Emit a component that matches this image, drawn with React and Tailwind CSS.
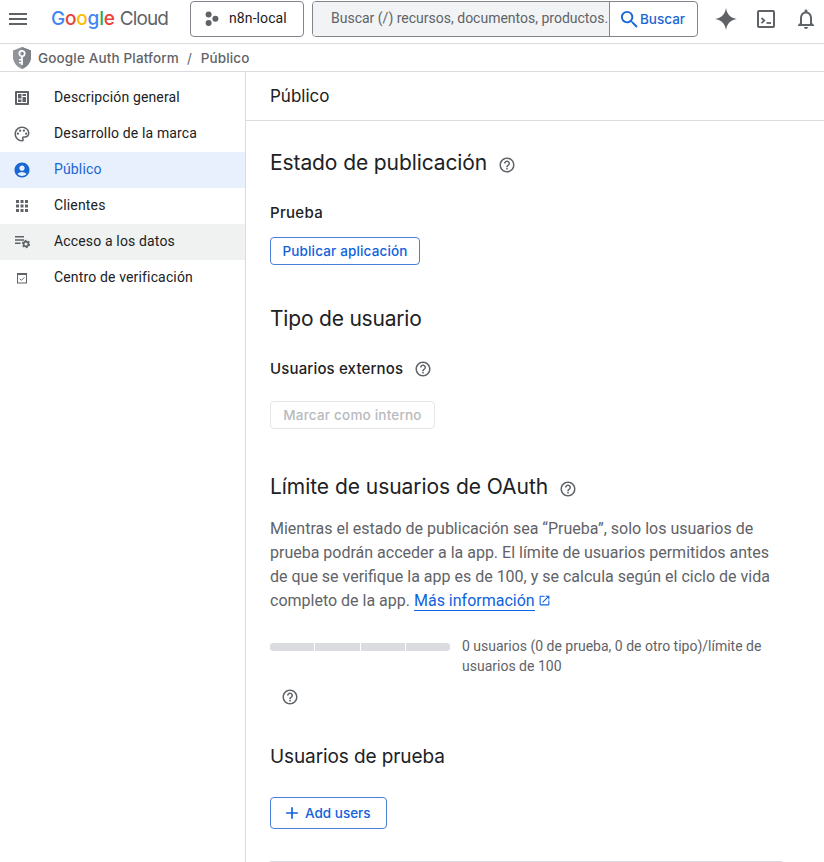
import React from "react";
import {
  MdMenu,
  MdSearch,
  MdHelpOutline,
  MdOutlinePalette,
  MdAccountCircle,
  MdApps,
  MdOpenInNew,
  MdAdd,
  MdNotificationsNone,
} from "react-icons/md";

const display = "font-['Google_Sans',Inter,sans-serif]";

function ProjectIcon() {
  return (
    <svg width="14" height="16" viewBox="0 0 14 16" fill="#5f6368">
      <circle cx="3.6" cy="3.6" r="3" />
      <circle cx="10.4" cy="7.8" r="3" />
      <circle cx="3.6" cy="12" r="3" />
    </svg>
  );
}

function ShieldIcon() {
  return (
    <svg width="20" height="24" viewBox="0 0 20 24">
      <path d="M10 1 19 4.4V11c0 5.4-3.7 9.9-9 12C4.7 20.9 1 16.4 1 11V4.4z" fill="#8f959a" />
      <path d="M10 1 19 4.4V11c0 5.4-3.7 9.9-9 12z" fill="#7d8388" />
      <circle cx="10" cy="7.6" r="2.7" fill="none" stroke="#fff" strokeWidth="1.7" />
      <path d="M9.2 10h1.7v9H9.200zM7 13h2.500v1.600H7zM7 16h2.500v1.600H7z" fill="#fff" />
    </svg>
  );
}

function SparkIcon() {
  return (
    <svg width="22" height="22" viewBox="0 0 22 22" fill="#5f6368">
      <path d="M11 0C12 6.500 15.500 10 22 11C15.500 12 12 15.500 11 22C10 15.500 6.500 12 0 11C6.500 10 10 6.500 11 0z" />
    </svg>
  );
}

function ShellIcon() {
  return (
    <svg width="18" height="18" viewBox="0 0 18 18" fill="none" stroke="#5f6368" strokeWidth="2">
      <rect x="1" y="1" width="16" height="16" rx="1" />
      <path d="m4.500 8 2.800 2.600-2.800 2.600" strokeWidth="1.800" />
      <path d="M9.500 13H14" strokeWidth="1.800" />
    </svg>
  );
}

function OverviewIcon() {
  return (
    <svg width="14" height="14" viewBox="0 0 14 14">
      <rect width="14" height="14" rx="1" fill="#5f6368" />
      <path d="M2 2h10v10H2z" fill="#fff" />
      <path d="M3 3h3.500v4.500H3zM7.500 3H11v2H7.500zM3 8.500h3.500V11H3zM7.500 6H11v5H7.500z" fill="#5f6368" />
    </svg>
  );
}

function DataAccessIcon() {
  return (
    <svg width="16" height="14" viewBox="0 0 16 14" fill="#5f6368">
      <path d="M1 1h9v1.500H1zM1 4.300h9v1.500H1zM1 7.600h5.500v1.500H1z" />
      <circle cx="12" cy="9" r="2.400" fill="none" stroke="#5f6368" strokeWidth="1.600" />
      <circle cx="12" cy="9" r="3.500" fill="none" stroke="#5f6368" strokeWidth="1.400" strokeDasharray="1.833" />
    </svg>
  );
}

function VerificationIcon() {
  return (
    <svg width="10" height="11" viewBox="0 0 10 11" fill="none" stroke="#5f6368">
      <rect x=".5" y=".5" width="9" height="9.500" />
      <path d="M0 1.200h10" strokeWidth="1.600" />
      <path d="m2.700 5.700 1.700 1.600 3-3" />
    </svg>
  );
}

function Help({ className = "" }) {
  return <MdHelpOutline size={18} className={"text-[#5f6368] " + className} />;
}

const nav = [
  { label: "Descripción general", icon: <OverviewIcon /> },
  { label: "Desarrollo de la marca", icon: <MdOutlinePalette size={18} /> },
  { label: "Público", icon: <MdAccountCircle size={18} />, state: "active" },
  { label: "Clientes", icon: <MdApps size={18} /> },
  { label: "Acceso a los datos", icon: <DataAccessIcon />, state: "hover" },
  { label: "Centro de verificación", icon: <VerificationIcon /> },
];

const rowStyles = {
  active: "bg-[#e8f0fe] text-[#1967d2]",
  hover: "bg-[#f0f2f1] text-[#202124]",
  idle: "text-[#202124]",
};

function TopBar() {
  return (
    <header className="flex h-11 items-start border-b border-[#dadce0] pt-px">
      <div className="flex h-9 w-[190px] items-center">
        <MdMenu size={24} className="ml-1.5 text-[#5f6368]" />
        <div className={display + " ml-[21px] flex gap-[5px] text-[19px] text-[#5f6368]"}>
          <span className="font-medium tracking-[-0.2px]">
            <span className="text-[#4285f4]">G</span>
            <span className="text-[#ea4335]">o</span>
            <span className="text-[#fbbc04]">o</span>
            <span className="text-[#4285f4]">g</span>
            <span className="text-[#34a853]">l</span>
            <span className="text-[#ea4335]">e</span>
          </span>
          <span className="tracking-[-0.9px]">Cloud</span>
        </div>
      </div>
      <button className="flex h-9 w-[114px] items-center rounded border border-[#80868b] pl-3.5 text-sm text-[#202124]">
        <ProjectIcon />
        <span className="-mt-0.5 ml-2.5 tracking-[0.1px]">n8n-local</span>
      </button>
      <div className="ml-2 flex h-9 w-[386px] overflow-hidden rounded border border-[#80868b]">
        <div className="flex w-[297px] items-center overflow-hidden border-r border-[#80868b] bg-[#f1f3f4] pb-0.5 pl-[18px] text-sm whitespace-nowrap text-[#5f6368]">
          <span>Buscar (/) recursos, documentos, productos.</span>
        </div>
        <button className="flex flex-1 items-center pl-2 text-[#1967d2]">
          <MdSearch size={23} />
          <span className={display + " -ml-px text-[13.5px] font-medium"}>Buscar</span>
        </button>
      </div>
      <div className="flex h-9 flex-1 items-center pl-[17px] text-[#5f6368]">
        <SparkIcon />
        <div className="ml-5"><ShellIcon /></div>
        <MdNotificationsNone size={24} className="ml-[19px] shrink-0" />
      </div>
    </header>
  );
}

export default function App() {
  return (
    <div className="flex h-[862px] w-[824px] flex-col overflow-hidden bg-white font-[Roboto,sans-serif] text-[#202124]">
      <TopBar />
      <div className={display + " flex h-7 items-center border-b border-[#dadce0] pl-3 text-[13.5px] font-medium text-[#5f6368]"}>
        <ShieldIcon />
        <span className="mt-px ml-1.5 tracking-[0.15px]">Google Auth Platform</span>
        <span className="mt-px ml-2 font-normal">/</span>
        <span className="mt-px ml-[9px] tracking-[0.1px]">Público</span>
      </div>
      <div className="flex min-h-0 flex-1">
        <nav className="w-[246px] shrink-0 border-r border-[#dadce0] pt-2">
          {nav.map((item) => (
            <a key={item.label} className={"flex h-9 items-center text-sm " + rowStyles[item.state || "idle"]}>
              <span className={"flex w-11 justify-center " + (item.state === "active" ? "text-[#1967d2]" : "text-[#5f6368]")}>
                {item.icon}
              </span>
              <span className="-mt-0.5 ml-2.5 tracking-[0.15px]">{item.label}</span>
            </a>
          ))}
        </nav>
        <main className="flex min-w-0 flex-1 flex-col">
          <h1 className={display + " flex h-[49px] shrink-0 items-center border-b border-[#dadce0] pt-0.5 pl-6 text-[17px]"}>Público</h1>
          <div className="flex flex-col items-start px-6 pt-[26px]">
            <h2 className={display + " flex h-8 items-center text-[21px] tracking-[-0.1px]"}>
              Estado de publicación
              <Help className="mt-1 ml-[11px]" />
            </h2>
            <h3 className={display + " mt-[22px] h-6 text-[15px] leading-6 font-medium tracking-[0.3px]"}>Prueba</h3>
            <button className={display + " mt-3 h-7 w-[150px] rounded border border-[#4a80d6] text-[13.5px] font-medium tracking-[0.15px] text-[#1062dc]"}>
              Publicar aplicación
            </button>
            <h2 className={display + " mt-[38px] h-8 text-[21px] leading-8 tracking-[-0.2px]"}>Tipo de usuario</h2>
            <h3 className={display + " mt-[22px] flex h-6 items-center text-[15px] font-medium tracking-[0.15px]"}>
              Usuarios externos
              <Help className="ml-[11px]" />
            </h3>
            <button className={display + " mt-5 h-7 w-[165px] rounded border border-[#e6e6e7] text-[13.5px] font-medium tracking-[0.2px] text-[#b9babc]"}>
              Marcar como interno
            </button>
            <h2 className={display + " mt-[42px] flex h-8 items-center text-[21px] tracking-[-0.05px]"}>
              Límite de usuarios de OAuth
              <Help className="mt-1 ml-[11px]" />
            </h2>
            <p className="mt-3.5 w-[512px] text-base leading-6 text-[#5f6368]">
              Mientras el estado de publicación sea “Prueba”, solo los usuarios de
              <br />
              prueba podrán acceder a la app. El límite de usuarios permitidos antes
              <br />
              de que se verifique la app es de 100, y se calcula según el ciclo de vida
              <br />
              completo de la app.{" "}
              <a className="border-b border-[#0b66e4] text-[#1062dc]">Más información</a>
              <MdOpenInNew size={13} className="ml-[3px] inline-block align-[-1px] text-[#1062dc]" />
            </p>
            <div className="mt-[23px] flex h-10 gap-3 text-sm leading-5 text-[#5f6368]">
              <div className="mt-[7px] flex h-2 w-[180px] gap-px overflow-hidden rounded-[3px]">
                <div className="flex-1 bg-[#dadce0]" />
                <div className="flex-1 bg-[#dadce0]" />
                <div className="flex-1 bg-[#dadce0]" />
                <div className="flex-1 bg-[#dadce0]" />
              </div>
              <span className="whitespace-nowrap">
                0 usuarios (0 de prueba, 0 de otro tipo)/límite de
                <br />
                usuarios de 100
              </span>
            </div>
            <Help className="mt-3 ml-[11px]" />
            <h2 className={display + " mt-[37px] h-7 text-[19px] leading-7 tracking-[-0.1px]"}>Usuarios de prueba</h2>
            <button className={display + " mt-[26px] flex h-8 w-[117px] items-center rounded border border-[#4a80d6] pl-[11px] text-[13.5px] font-medium text-[#1062dc]"}>
              <MdAdd size={20} />
              <span className="ml-[3px]">Add users</span>
            </button>
            <div className="mt-8 h-px w-[512px] bg-[#dadce0]" />
          </div>
        </main>
      </div>
    </div>
  );
}
